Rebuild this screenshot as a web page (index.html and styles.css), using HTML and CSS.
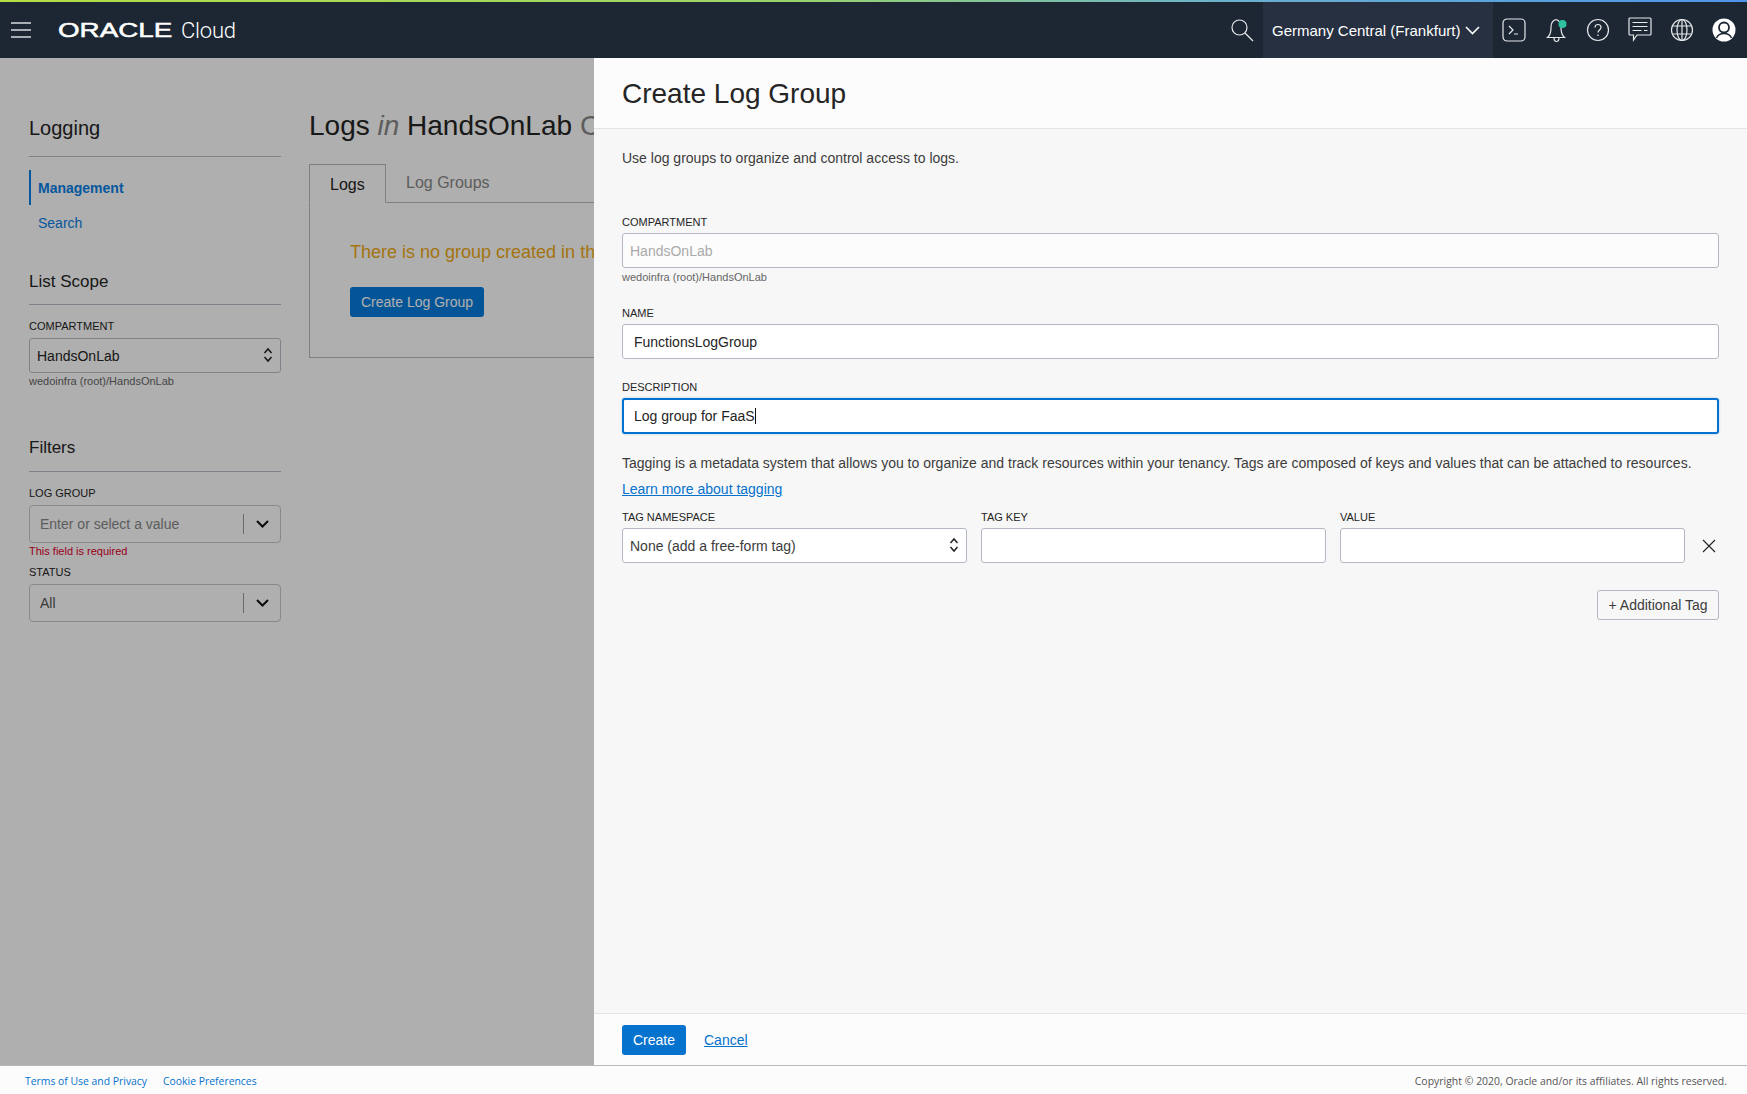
FILE: index.html
```html
<!DOCTYPE html>
<html lang="en">
<head>
  <meta charset="UTF-8" />
  <title>Create Log Group</title>
  <link rel="stylesheet" href="styles.css">
</head>
<body>

  <header class="topbar">
    <div class="topbar-left">
      <svg class="burger" width="22" height="16" viewBox="0 0 22 16"><path d="M1 1h20M1 8h20M1 15h20" stroke="#d8dce0" stroke-width="1.3" fill="none"/></svg>
      <div class="logo"><span class="logo-mark">ORACLE</span><span class="logo-cloud">Cloud</span></div>
    </div>
    <div class="topbar-right">
      <svg class="search-icon" width="24" height="24" viewBox="0 0 24 24" fill="none" stroke="#e6e8ea" stroke-width="1.2"><circle cx="9.5" cy="9.5" r="7.5"/><path d="M15 15l8 8"/></svg>
      <div class="region">Germany Central (Frankfurt)
        <svg width="15" height="9" viewBox="0 0 15 9" fill="none" stroke="#fff" stroke-width="1.6"><path d="M1 1l6.5 6.5L14 1"/></svg>
      </div>
      <div class="top-icons">
        <svg width="24" height="24" viewBox="0 0 24 24" fill="none" stroke="#e6e8ea" stroke-width="1.2"><rect x="1" y="1" width="22" height="22" rx="4"/><path d="M7 8l4 4-4 4M12 16h4"/></svg>
        <svg width="24" height="26" viewBox="-2 0 24 26" fill="none" stroke="#e6e8ea" stroke-width="1.2"><path d="M10 2.500c-4 1-5 4-5 8 0 5-1 8-3.500 10h17c-2.500-2-3.500-5-3.500-10 0-4-1-7-5-8z"/><path d="M8 20.500c0 3 1.500 4 2.500 4s2.500-1 2.500-4"/><circle cx="16.500" cy="7" r="4" fill="#2fc0a0" stroke="none"/></svg>
        <svg width="24" height="24" viewBox="0 0 24 24" fill="none" stroke="#e6e8ea" stroke-width="1.2"><circle cx="12" cy="12" r="10.500"/><path d="M9 9.500c0-4 6-4 6 0 0 2.500-3 2.500-3 5"/><path d="M12 16.500v1.500"/></svg>
        <svg width="24" height="26" viewBox="0 0 24 26" fill="none" stroke="#e6e8ea" stroke-width="1.2"><path d="M2 1h20a1 1 0 0 1 1 1v15a1 1 0 0 1-1 1H9l-3.500 5v-5H2a1 1 0 0 1-1-1V2a1 1 0 0 1 1-1z"/><path d="M4.500 5.500h15M4.500 9.500h15M4.500 13.500h9M16 13.500h3.500"/></svg>
        <svg width="24" height="24" viewBox="0 0 24 24" fill="none" stroke="#e6e8ea" stroke-width="1.2"><circle cx="12" cy="12" r="10.500"/><ellipse cx="12" cy="12" rx="5" ry="10.500"/><path d="M12 1.500v21M2.500 8h19M2.500 16h19"/></svg>
        <svg width="24" height="24" viewBox="0 0 24 24"><circle cx="12" cy="12" r="11.500" fill="#fff"/><circle cx="12" cy="9.500" r="5" fill="#fff" stroke="#1c2733" stroke-width="1.800"/><path d="M4.500 20c1.500-3.500 4.500-4.500 7.500-4.500s6 1 7.500 4.500" fill="none" stroke="#1c2733" stroke-width="1.500"/></svg>
      </div>
    </div>
  </header>

  <div class="workspace">
    <aside class="sidebar">
      <h2 class="side-title first">Logging</h2>
      <nav class="side-nav">
        <a class="nav-item active">Management</a>
        <a class="nav-item">Search</a>
      </nav>

      <h2 class="side-title scope">List Scope</h2>
      <label class="small-label">COMPARTMENT</label>
      <div class="side-select">HandsOnLab
        <svg class="updown" width="10" height="16" viewBox="0 0 10 16" fill="none" stroke="#222" stroke-width="1.5"><path d="M1.500 6l3.500-4 3.500 4M1.500 10l3.500 4 3.500-4"/></svg>
      </div>
      <div class="helper">wedoinfra (root)/HandsOnLab</div>

      <h2 class="side-title filters">Filters</h2>
      <label class="small-label">LOG GROUP</label>
      <div class="combo tall">
        <span class="placeholder">Enter or select a value</span>
        <span class="combo-btn"><svg width="13" height="8" viewBox="0 0 13 8" fill="none" stroke="#111" stroke-width="2"><path d="M1 1l5.500 5.500L12 1"/></svg></span>
      </div>
      <div class="error">This field is required</div>
      <label class="small-label status">STATUS</label>
      <div class="combo">
        <span class="combo-value">All</span>
        <span class="combo-btn"><svg width="13" height="8" viewBox="0 0 13 8" fill="none" stroke="#111" stroke-width="2"><path d="M1 1l5.500 5.500L12 1"/></svg></span>
      </div>
    </aside>

    <main class="content">
      <h1 class="page-title">Logs <em>in</em> HandsOnLab <span class="muted">Compartment</span></h1>
      <div class="tabs">
        <div class="tab active">Logs</div>
        <div class="tab">Log Groups</div>
      </div>
      <div class="tab-body">
        <p class="warning">There is no group created in this compartment.</p>
        <button class="btn-dark">Create Log Group</button>
      </div>
    </main>

    <div class="overlay"></div>

    <section class="panel">
      <div class="panel-head"><h1>Create Log Group</h1></div>

      <div class="panel-body">
        <p class="intro">Use log groups to organize and control access to logs.</p>

        <label class="small-label compartment">COMPARTMENT</label>
        <input class="field disabled" value="HandsOnLab" disabled />
        <div class="helper">wedoinfra (root)/HandsOnLab</div>

        <label class="small-label name">NAME</label>
        <input class="field named" value="FunctionsLogGroup" />

        <label class="small-label desc">DESCRIPTION</label>
        <div class="field focused">Log group for FaaS<span class="caret"></span></div>

        <p class="tag-text">Tagging is a metadata system that allows you to organize and track resources within your tenancy. Tags are composed of keys and values that can be attached to resources.</p>
        <a class="link learn">Learn more about tagging</a>

        <div class="tag-row">
          <div class="tag-col">
            <label class="small-label">TAG NAMESPACE</label>
            <div class="field tag-select">None (add a free-form tag)
              <svg class="updown" width="10" height="16" viewBox="0 0 10 16" fill="none" stroke="#222" stroke-width="1.5"><path d="M1.500 6l3.500-4 3.500 4M1.500 10l3.500 4 3.500-4"/></svg>
            </div>
          </div>
          <div class="tag-col">
            <label class="small-label">TAG KEY</label>
            <input class="field tag-input" />
          </div>
          <div class="tag-col">
            <label class="small-label">VALUE</label>
            <input class="field tag-input" />
          </div>
          <svg class="remove" width="14" height="14" viewBox="0 0 14 14" fill="none" stroke="#222" stroke-width="1.1"><path d="M1 1l12 12M13 1L1 13"/></svg>
        </div>

        <div class="add-row"><button class="btn-outline">+ Additional Tag</button></div>
      </div>

      <div class="panel-foot">
        <button class="btn-primary">Create</button>
        <a class="link">Cancel</a>
      </div>
    </section>
  </div>

  <footer class="page-foot">
    <div class="foot-links"><a>Terms of Use and Privacy</a><a>Cookie Preferences</a></div>
    <div class="copyright">Copyright © 2020, Oracle and/or its affiliates. All rights reserved.</div>
  </footer>

</body>
</html>
```

FILE: styles.css
```css
* {
  box-sizing: border-box;
}

body {
  margin: 0;
  height: 100vh;
  display: flex;
  flex-direction: column;
  overflow: hidden;
  font-family: "Liberation Sans", Arial, sans-serif;
  font-size: 14px;
  color: #252525;
  background-color: #fff;
}

/* top bar */
.topbar {
  height: 58px;
  flex: none;
  display: flex;
  justify-content: space-between;
  background-color: #1c2733;
  border-top: 2px solid;
  border-image: linear-gradient(90deg, #b4de45, #9ad46a 45%, #6ab2cc 70%, #4d95ea) 1;
  color: #fff;
}

.topbar-left {
  display: flex;
  align-items: center;
  padding-left: 10px;
}

.logo {
  display: flex;
  align-items: center;
  margin-left: 26px;
}

.logo-mark {
  display: inline-block;
  width: 115px;
  font-size: 20px;
  font-weight: normal;
  -webkit-text-stroke: 0.5px #fff;
  transform: scaleX(1.39);
  transform-origin: left center;
}

.logo-cloud {
  margin-left: 8px;
  font-family: Roboto, sans-serif;
  font-weight: 300;
  font-size: 22px;
  letter-spacing: -0.2px;
}

.topbar-right {
  display: flex;
  align-items: stretch;
}

.search-icon {
  align-self: center;
  margin-right: 9px;
}

.region {
  width: 230px;
  display: flex;
  align-items: center;
  gap: 5px;
  padding-left: 9px;
  background-color: #263040;
  font-size: 15px;
}

.top-icons {
  width: 254px;
  display: flex;
  align-items: center;
  gap: 18px;
  padding-left: 9px;
}

/* page behind the panel */
.workspace {
  position: relative;
  flex: 1;
  min-height: 0;
  display: flex;
}

.overlay {
  position: absolute;
  inset: 0;
  background-color: rgba(0, 0, 0, 0.314);
}

.sidebar {
  width: 281px;
  flex: none;
  margin-left: 29px;
  padding-top: 58px;
}

.sidebar > * {
  width: 252px;
}

.side-title {
  margin: 0;
  font-size: 17px;
  line-height: 26px;
  font-weight: normal;
  border-bottom: 1px solid #b9bec6;
}

.side-title.first {
  line-height: 24px;
  padding-bottom: 16px;
  font-size: 20px;
}

.side-title.scope {
  margin-top: 29px;
  padding-bottom: 9px;
}

.side-title.filters {
  margin-top: 48px;
  padding-bottom: 10px;
}

.side-nav {
  margin-top: 13px;
}

.nav-item {
  display: flex;
  align-items: center;
  height: 35px;
  padding-left: 9px;
  color: #0880e6;
}

.nav-item.active {
  padding-left: 7px;
  border-left: 2px solid #0880e6;
  font-weight: bold;
}

.small-label {
  display: block;
  font-size: 11px;
  line-height: 14px;
  color: #252525;
}

.sidebar .small-label {
  margin-top: 14px;
}

.sidebar .small-label.status {
  margin-top: 8px;
}

.side-select {
  position: relative;
  height: 35px;
  margin-top: 5px;
  display: flex;
  align-items: center;
  padding-left: 7px;
  background-color: #fff;
  border: 1px solid #b9bec6;
  border-radius: 3px;
}

.updown {
  position: absolute;
  right: 7px;
  top: 8px;
}

.helper {
  margin-top: 2px;
  font-size: 11px;
  line-height: 12px;
  color: #666;
}

.combo {
  height: 38px;
  margin-top: 5px;
  display: flex;
  align-items: center;
  justify-content: space-between;
  padding-left: 10px;
  border: 1px solid #c4c8ce;
  border-radius: 4px;
  background-color: #fff;
}

.placeholder {
  color: #888;
}

.combo-value {
  color: #555;
}

.combo-btn {
  width: 37px;
  height: 20px;
  display: flex;
  align-items: center;
  justify-content: center;
  border-left: 1px solid #999;
}

.error {
  margin-top: 2px;
  font-size: 11px;
  line-height: 12px;
  color: #e0002a;
}

.content {
  flex: 1;
  min-width: 0;
  margin-left: -1px;
  padding: 52px 40px 0 0;
}

.page-title {
  margin: 0;
  font-size: 28px;
  line-height: 32px;
  font-weight: normal;
  white-space: nowrap;
}

.page-title em {
  color: #888;
}

.muted {
  color: #888;
}

.tabs {
  display: flex;
  height: 39px;
  margin-top: 22px;
  border-bottom: 1px solid #b9b9b9;
}

.tab {
  display: flex;
  align-items: center;
  padding: 0 20px;
  font-size: 16px;
  color: #888;
}

.tab.active {
  width: 77px;
  padding: 3px 0 0 20px;
  height: 39px;
  background-color: #fff;
  color: #252525;
  border: 1px solid #b9b9b9;
  border-bottom: 1px solid #fff;
}

.tab-body {
  height: 155px;
  padding: 38px 40px;
  border: 1px solid #b9b9b9;
  border-top: none;
}

.warning {
  margin: 0;
  font-size: 18px;
  line-height: 22px;
  white-space: nowrap;
  color: #f0aa15;
}

.btn-dark {
  display: block;
  height: 30px;
  margin-top: 24px;
  padding: 0 11px;
  border: none;
  border-radius: 3px;
  background-color: #077dde;
  color: #fff;
  font: 14px "Liberation Sans", Arial, sans-serif;
}

/* slide-in panel */
.panel {
  position: absolute;
  top: 0;
  bottom: 0;
  right: 0;
  width: 1153px;
  display: flex;
  flex-direction: column;
  background-color: #f7f7f7;
}

.panel-head {
  height: 71px;
  flex: none;
  padding: 18px 28px 0;
  background-color: #fcfcfc;
  border-bottom: 1px solid #e4e4e4;
}

.panel-head h1 {
  margin: 0;
  font-size: 28px;
  line-height: 36px;
  font-weight: normal;
}

.panel-body {
  flex: 1;
  padding: 19px 28px 0;
}

.intro {
  margin: 0;
  line-height: 20px;
  color: #3c3c3c;
}

.small-label.compartment {
  margin-top: 47px;
}

.small-label.name {
  margin-top: 23px;
}

.small-label.desc {
  margin-top: 21px;
}

.field {
  display: flex;
  align-items: center;
  width: 100%;
  height: 35px;
  margin-top: 4px;
  padding: 0 7px;
  background-color: #fff;
  border: 1px solid #b3b8c4;
  border-radius: 3px;
  font: 14px "Liberation Sans", Arial, sans-serif;
  color: #252525;
  outline: none;
}

.field.disabled {
  background-color: #fcfcfc;
  color: #aaa;
}

.panel-body .helper {
  margin-top: 3px;
}

.field.named {
  padding-left: 11px;
}

.field.focused {
  height: 36px;
  padding-left: 10px;
  border: 2px solid #0572ce;
  box-shadow: 0 0 2px #8fc1ea;
}

.caret {
  width: 1px;
  height: 16px;
  background-color: #111;
}

.tag-text {
  margin: 19px 0 0;
  line-height: 20px;
  color: #3c3c3c;
  white-space: nowrap;
}

.link {
  color: #0572ce;
  text-decoration: underline;
}

.learn {
  display: block;
  margin-top: 6px;
  line-height: 20px;
}

.tag-row {
  display: flex;
  align-items: flex-end;
  gap: 14px;
  margin-top: 11px;
}

.tag-col {
  width: 345px;
}

.tag-select,
.tag-input {
  height: 35px;
}

.tag-select {
  position: relative;
  color: #3c3c3c;
}

.remove {
  margin: 0 0 10px 3px;
}

.add-row {
  display: flex;
  justify-content: flex-end;
  margin-top: 27px;
}

.btn-outline {
  width: 122px;
  height: 30px;
  padding: 0;
  background-color: #f7f7f7;
  border: 1px solid #b3b8c4;
  border-radius: 3px;
  font: 14px "Liberation Sans", Arial, sans-serif;
  color: #3c3c3c;
}

.panel-foot {
  height: 52px;
  flex: none;
  display: flex;
  align-items: center;
  gap: 18px;
  padding-left: 28px;
  background-color: #fcfcfc;
  border-top: 1px solid #e4e4e4;
}

.btn-primary {
  width: 64px;
  height: 30px;
  padding: 0;
  border: none;
  border-radius: 3px;
  background-color: #0572ce;
  color: #fff;
  font: 14px "Liberation Sans", Arial, sans-serif;
}

/* page footer */
.page-foot {
  height: 29px;
  flex: none;
  display: flex;
  align-items: center;
  justify-content: space-between;
  padding: 2px 20px 0 25px;
  background-color: #fcfcfc;
  border-top: 1px solid #b5b8bd;
  font-family: "Open Sans", sans-serif;
  font-size: 10.4px;
}

.foot-links {
  display: flex;
  gap: 16px;
  color: #0572ce;
}

.copyright {
  color: #555;
  letter-spacing: 0.03px;
}
```
